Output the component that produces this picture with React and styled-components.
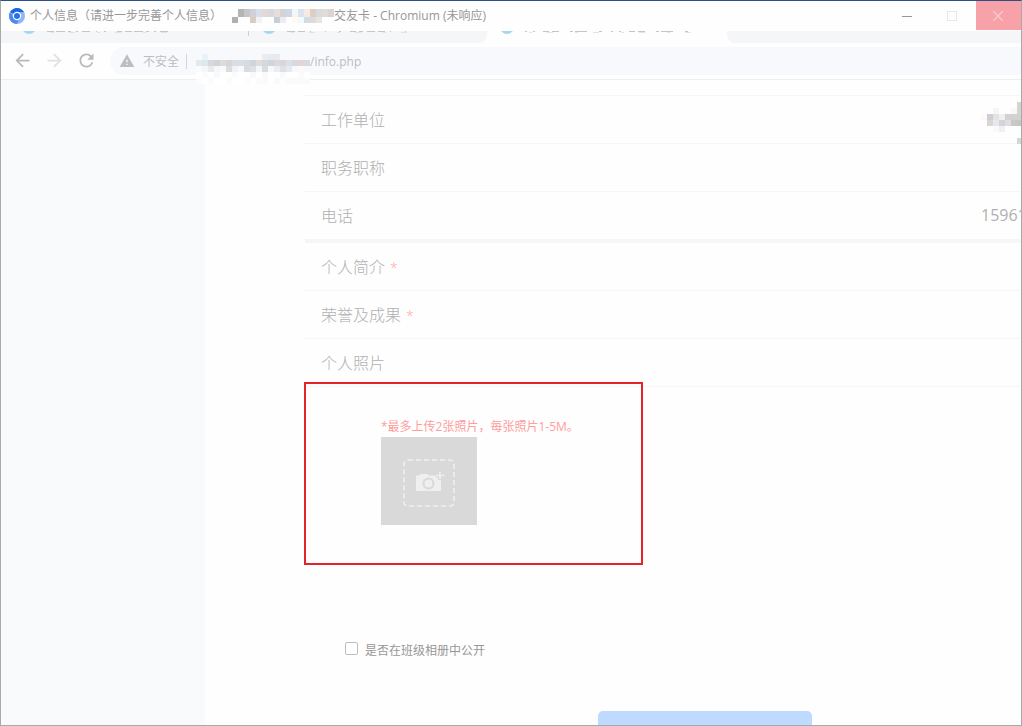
import React, { useState } from "react";
import styled, { createGlobalStyle } from "styled-components";
import { MdArrowBack, MdArrowForward, MdRefresh, MdWarning } from "react-icons/md";

const GlobalStyle = createGlobalStyle`
  * {
    box-sizing: border-box;
  }

  body {
    margin: 0;
    font-family: "Open Sans", "Noto Sans CJK SC", sans-serif;
    font-size: 12px;
    background: #fff;
  }

  button,
  input {
    font: inherit;
    color: inherit;
  }
`;

const Window = styled.div`
  display: flex;
  flex-direction: column;
  height: 100vh;
  overflow: hidden;
  background: #fefefe;
  border: 1px solid #a9a9a9;
  border-top-color: #2d4f86;
`;

const TitleBar = styled.header`
  display: flex;
  align-items: center;
  flex: none;
  height: 30px;
  padding-left: 8px;
  color: #979797;
`;

const WindowTitle = styled.h1`
  display: flex;
  align-items: center;
  flex: 1;
  margin: 0 0 0 5px;
  font-size: 12px;
  font-weight: 400;
  line-height: 30px;
  white-space: nowrap;
`;

const WindowButton = styled.button`
  display: flex;
  align-items: center;
  justify-content: center;
  width: 45px;
  height: 29px;
  padding: 0 ${(props) => (props.$close ? 2 : 4)}px 0 0;
  border: none;
  align-self: flex-start;
  background: ${(props) => (props.$close ? "#f7a1a8" : "transparent")};
`;

const TabStrip = styled.nav`
  display: flex;
  flex: none;
  height: 16px;
  padding-bottom: 4px;
  background: #fefefe;
`;

const TabGroup = styled.div`
  display: flex;
  flex: ${(props) => props.$grow || "none"};
  padding-left: 8px;
  background: #f5f6f8;
  border-radius: ${(props) => props.$radius};
  overflow: hidden;
`;

const Tab = styled.a`
  display: flex;
  align-items: flex-end;
  gap: 11px;
  width: ${(props) => props.$width}px;
  height: 3px;
  padding-left: 13px;
  overflow: hidden;
  text-decoration: none;

  svg {
    align-self: flex-start;
  }
`;

const TabDot = styled.span`
  flex: none;
  width: 14px;
  height: 14px;
  border-radius: 50%;
  background: #a5d6f2;
`;

const TabDivider = styled.span`
  width: 1px;
  height: 5px;
  background: #cfcfd2;
`;

const Toolbar = styled.div`
  display: flex;
  align-items: center;
  flex: none;
  height: 33px;
  padding: 0 0 4px 5px;
  border-bottom: 1px solid #eeeeef;
`;

const ToolButton = styled.button`
  display: flex;
  align-items: center;
  justify-content: center;
  width: 32px;
  height: 28px;
  padding: 0 0 2px;
  border: none;
  background: none;
  color: ${(props) => (props.disabled ? "#e1e1e1" : "#b9b9b9")};
`;

const AddressBar = styled.div`
  display: flex;
  align-items: center;
  flex: 1;
  height: 28px;
  margin-left: 8px;
  padding-left: 9px;
  border-radius: 14px 0 0 14px;
  background: #f8f9fd;
  color: #bdbdbd;
`;

const Security = styled.span`
  margin-left: 8px;
  padding-right: 7px;
  border-right: 1px solid #d4d5d8;
  line-height: 15px;
`;

const MosaicSlot = styled.span`
  position: relative;
  flex: none;
  width: ${(props) => props.$width}px;
  height: ${(props) => props.$height}px;
  margin-left: ${(props) => props.$gap || 0}px;

  svg {
    position: absolute;
    top: 0;
    left: 0;
    z-index: 1;
  }
`;

const Page = styled.div`
  display: flex;
  flex: 1;
  min-height: 0;
  overflow: hidden;
`;

const Sidebar = styled.aside`
  flex: none;
  width: 204px;
  background: #f9fafc;
`;

const Form = styled.form`
  flex: 1 0 auto;
  min-width: 800px;
  margin-left: 100px;
  padding-top: 15px;
`;

const FieldList = styled.div`
  border-top: ${(props) => (props.$thick ? "4px" : "1px")} solid #f6f6f6;
`;

const Field = styled.div`
  display: flex;
  align-items: center;
  justify-content: space-between;
  height: ${(props) => (props.$last ? 47 : 48)}px;
  padding: 0 16px 2px;
  border-bottom: ${(props) => (props.$last ? 0 : 1)}px solid #f6f6f6;
  color: #b0b0b0;
  font-size: 16px;
  font-weight: 300;
`;

const Required = styled.span`
  margin-left: 5px;
  color: #ffa3a3;
  font-size: 14px;
`;

const FieldInput = styled.input`
  width: 108px;
  padding: 0;
  border: none;
  outline: none;
  background: transparent;
  font-weight: 400;
`;

const PhotoSection = styled.section`
  position: relative;
  height: 253px;
  padding: 30px 76px;
`;

const Highlight = styled.div`
  position: absolute;
  top: -5px;
  left: -1px;
  width: 339px;
  height: 183px;
  border: 2px solid #e5232b;
  pointer-events: none;
`;

const Hint = styled.p`
  margin: 0;
  color: #ff9c9c;
  line-height: 20px;
`;

const UploadButton = styled.button`
  display: flex;
  align-items: center;
  justify-content: center;
  width: 96px;
  height: 88px;
  padding: 4px 0 0;
  border: none;
  background: #d9d9d9;
`;

const PublicOption = styled.label`
  display: flex;
  align-items: flex-start;
  gap: 7px;
  padding: 2px 0 0 40px;
  color: #979797;
  line-height: 18px;
`;

const Checkbox = styled.input.attrs({
  type: "checkbox"
})`
  appearance: none;
  width: 13px;
  height: 13px;
  margin: 0;
  border: 1px solid #bdbdbd;
  border-radius: 2px;
  background: ${(props) => (props.checked ? "#bfdaff" : "#fff")};
`;

const SubmitButton = styled.button`
  display: block;
  width: 214px;
  height: 44px;
  margin: 51px auto 0;
  border: none;
  border-radius: 5px;
  background: #bfdaff;
`;

// "-" leaves a cell empty
const TITLE_CELLS = [
  "- #b4b4b4 #c6c6c8 #d0d0da #d9deec #e6d8d2 #d8d8e0 #e8dddb #d4d4d4 #ced8e2 #f3f7fa #dce3ec #f4ece4 #dccfc8 #dbdbdb #dfdcda #dcd4d2",
  "#b0b0b0 - - #d5cdc6 #f2f2f2 - - #c6d0d4 #eaeef4 - #fffaf3 #f3faff #d0dce4 #dfdbd6 #e8e5e0 - -"
];

const URL_CELLS = [
  "- #e9f2f8 - - - - - - - - - #eeeaf0 #e8eaee #e8ebea - - - - -",
  "#e3eaec #dceaf0 #d5d8dc #d4d4d6 #dedcd8 #d8d4d8 #dedce0 #d2e0ea #d8dadc #d0d4dc #e0dcda #d4dad8 #cfd5dc #e0d8d8 #d9d6e0 #dce0e2 #d8d8e0 #e2d6d6 #dcd9dc",
  "#fafbfd #f4f6fa #e9ebef #f5f7fb #fafafc #dadde0 #f1f2f7 #f7f9fd #d8dce0 #dde0e4 #f3f5fb #d8dcde #f4f7fd #e9edf7 #dee0e4 #e8e9ee #f7f8fc #fafafa #f7f8fc",
  "#fff #fcfcfe #fff #f8f9fc #fff #fff #fbfbfd #fff #fff #f9f9fb #fff #f9f9fb #fff #fff #fafafc #fff #fff #fbfbfd #fff",
  "#fdfdfd #fff #fbfbfc #fff #fff #fbfbfb #fff #fff #fcfcfc #fff #fbfbfb #fafafa #fff #fafafa #fdfdfd #fafafa #fafafa #fafafa #fafafa"
];

const UNIT_CELLS = [
  "- - - - - - #d4d4d4",
  "- - #f5f5f5 - - #fbf7f2 #d4d4d4",
  "#fffaf7 #cdced6 #e2e4e0 #edf0ef #d2d2d4 #d2d2d0 #d2d2d2",
  "- #dcd6d2 #e6e8ea #d2d3dc #e4dcdc #c9c8c4 #c6c6c6",
  "- - #f7fafc #eff1f1 - - -",
  "- - - - - - -",
  "- - - - - - #d6d6d6"
];

const Mosaic = ({ rows, firstHeight = 6 }) => {
  const height = firstHeight + (rows.length - 1) * 6;
  return (
    <svg width={rows[0].split(" ").length * 6} height={height} shapeRendering="crispEdges" aria-hidden="true">
      {rows.map((row, y) =>
        row.split(" ").map((fill, x) =>
          fill === "-" ? null : (
            <rect
              key={`${x}-${y}`}
              x={x * 6}
              y={y === 0 ? 0 : firstHeight + (y - 1) * 6}
              width="6"
              height={y === 0 ? firstHeight : 6}
              fill={fill}
            />
          )
        )
      )}
    </svg>
  );
};

// lower edge of a tab that the title bar covers
const TabEdge = ({ width, dashes }) => (
  <svg width={width} height="2" aria-hidden="true">
    <path d={`M0 0.500H${width}`} stroke="#c4c6c8" strokeDasharray={dashes} />
    <path d={`M4 1.500H${width - 4}`} stroke="#e2e3e5" strokeDasharray="3 15 6 22" />
  </svg>
);

const ChromiumLogo = () => (
  <svg width="16" height="16" viewBox="0 0 16 16" aria-hidden="true">
    <circle cx="8" cy="8" r="8" fill="#8db6fb" />
    <path d="M8 8 1.1 4A8 8 0 0 1 14.9 4.1L8 4.3Z" fill="#1a66dc" />
    <path d="M1.1 4A8 8 0 0 0 7.6 16L11 10 8 8 4.6 9.6Z" fill="#4a8af0" />
    <circle cx="8" cy="8" r="4.2" fill="#fff" />
    <circle cx="8" cy="8" r="3" fill="#2672e6" />
  </svg>
);

const CameraIcon = () => (
  <svg width="54" height="50" viewBox="0 0 54 50" fill="none" aria-hidden="true">
    <rect x="2" y="2" width="50" height="46" rx="4" stroke="#efefef" strokeWidth="1.6" strokeDasharray="5 3" />
    <path d="M14 17.5h3l1-1.5h7l1.5 1.5h12.5v15.5H14Z" fill="#efefef" />
    <circle cx="26.5" cy="25.5" r="5" stroke="#d9d9d9" strokeWidth="2" />
    <path d="M38 13v9M33.5 17.5h9" stroke="#d9d9d9" strokeWidth="4" />
    <path d="M38 14v7M34 17.5h8.5" stroke="#efefef" strokeWidth="1.6" />
  </svg>
);

export default () => {
  const [phone, setPhone] = useState("15961");
  const [open, setOpen] = useState(false);

  return (
    <Window>
      <GlobalStyle />
      <TitleBar>
        <ChromiumLogo />
        <WindowTitle>
          个人信息（请进一步完善个人信息）
          <MosaicSlot $width={102} $height={14} $gap={10}>
            <Mosaic rows={TITLE_CELLS} firstHeight={8} />
          </MosaicSlot>
          交友卡 - Chromium (未响应)
        </WindowTitle>
        <WindowButton aria-label="最小化">
          <svg width="10" height="10">
            <path d="M0 5.5h10" stroke="#979797" />
          </svg>
        </WindowButton>
        <WindowButton aria-label="最大化">
          <svg width="10" height="10">
            <rect x="0.5" y="0.5" width="9" height="9" fill="none" stroke="#e8e8e8" />
          </svg>
        </WindowButton>
        <WindowButton $close aria-label="关闭">
          <svg width="10" height="10">
            <path d="M0 0l10 10M10 0L0 10" stroke="#fbd0d3" strokeWidth="1.2" />
          </svg>
        </WindowButton>
      </TitleBar>
      <TabStrip>
        <TabGroup $radius="0 0 8px 0">
          <Tab href="#tab1" $width={239}>
            <TabDot />
            <TabEdge width={126} dashes="7 2 9 3 3 5 2 4 8 6 1 7 2 11 5 3" />
          </Tab>
          <TabDivider />
          <Tab href="#tab2" $width={238}>
            <TabDot />
            <TabEdge width={126} dashes="8 3 7 5 1 14 1 13 2 9 6 3 4 4" />
          </Tab>
        </TabGroup>
        <Tab href="#tab3" $width={240}>
          <TabDot />
          <TabEdge width={172} dashes="2 6 2 8 6 3 7 11 3 2 12 12 3 9" />
        </Tab>
        <TabGroup $grow="1" $radius="0 0 0 8px" />
      </TabStrip>
      <Toolbar>
        <ToolButton aria-label="后退">
          <MdArrowBack size={21} />
        </ToolButton>
        <ToolButton aria-label="前进" disabled>
          <MdArrowForward size={21} />
        </ToolButton>
        <ToolButton aria-label="重新加载">
          <MdRefresh size={21} />
        </ToolButton>
        <AddressBar>
          <MdWarning size={16} />
          <Security>不安全</Security>
          <MosaicSlot $width={114} $height={14} $gap={9}>
            <Mosaic rows={URL_CELLS} />
          </MosaicSlot>
          <span>/info.php</span>
        </AddressBar>
      </Toolbar>
      <Page>
        <Sidebar />
        <Form onSubmit={(e) => e.preventDefault()}>
          <FieldList>
            <Field>
              <span>工作单位</span>
              <MosaicSlot $width={108} $height={34}>
                <Mosaic rows={UNIT_CELLS} />
              </MosaicSlot>
            </Field>
            <Field>
              <label htmlFor="title">职务职称</label>
              <FieldInput id="title" />
            </Field>
            <Field $last>
              <label htmlFor="phone">电话</label>
              <FieldInput id="phone" value={phone} onChange={(e) => setPhone(e.target.value)} />
            </Field>
          </FieldList>
          <FieldList $thick>
            <Field>
              <label htmlFor="intro">
                个人简介<Required>*</Required>
              </label>
              <FieldInput id="intro" />
            </Field>
            <Field>
              <label htmlFor="honor">
                荣誉及成果<Required>*</Required>
              </label>
              <FieldInput id="honor" />
            </Field>
            <Field>
              <span>个人照片</span>
            </Field>
          </FieldList>
          <PhotoSection>
            <Highlight />
            <Hint>*最多上传2张照片，每张照片1-5M。</Hint>
            <UploadButton type="button" aria-label="上传照片">
              <CameraIcon />
            </UploadButton>
          </PhotoSection>
          <PublicOption>
            <Checkbox checked={open} onChange={(e) => setOpen(e.target.checked)} />
            是否在班级相册中公开
          </PublicOption>
          <SubmitButton type="submit" aria-label="提交" />
        </Form>
      </Page>
    </Window>
  );
};
